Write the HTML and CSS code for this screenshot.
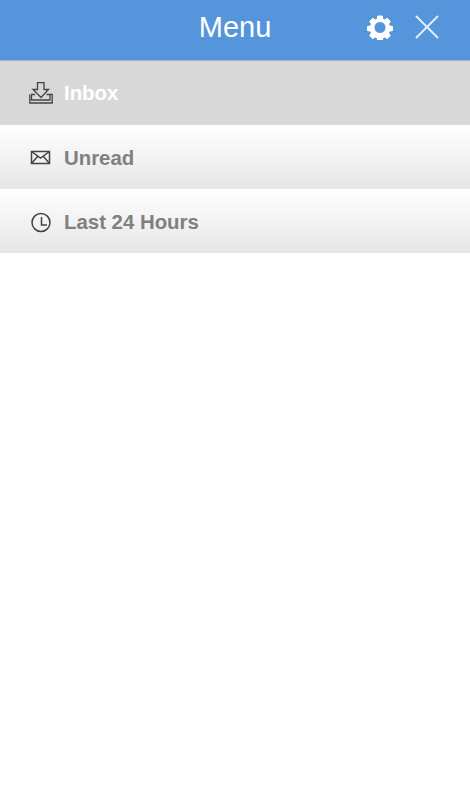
FILE: index.html
```html
<!DOCTYPE html>
<html lang="en">
<head>
  <meta charset="UTF-8">
  <meta name="viewport" content="width=device-width, initial-scale=1.0">
  <title>Menu</title>
  <link rel="stylesheet" href="styles.css">
</head>
<body>
  <header class="top-bar">
    <h1>Menu</h1>
    <div class="top-actions">
      <svg class="gear-icon" width="26" height="26" viewBox="0.5 0 26 26">
        <path fill="#fff" stroke="#fff" stroke-width="1" stroke-linejoin="round" fill-rule="evenodd" d="M11.800 2.500h4.400l.6 3.200 1.700.8 2.800-1.700 3 3-1.700 2.800.7 1.700 3.200.7v4l-3.200.7-.7 1.700 1.700 2.800-3 3-2.800-1.700-1.700.8-.6 3.200h-4.400l-.6-3.200-1.700-.8-2.800 1.700-3-3 1.700-2.800-.7-1.700-3.200-.7v-4l3.200-.7.7-1.700-1.700-2.800 3-3 2.800 1.700 1.700-.8zM14 8a6 6 0 1 0 0 12 6 6 0 0 0 0-12z" transform="translate(-.5 -.5)"/>
      </svg>
      <svg class="close-icon" width="24" height="24" viewBox="0 0 24 24">
        <path d="M1 1l22 22M23 1L1 23" stroke="#e4eefa" stroke-width="2" fill="none"/>
      </svg>
    </div>
  </header>

  <nav class="menu">
    <a class="menu-item active">
      <svg class="item-icon" width="24" height="24" viewBox="0 0 24 24" fill="none" stroke="#444" stroke-width="1.300">
        <path d="M8.500 1.700h6.500v6.800h4.500L12 16.500 4 8.500h4.500z"/>
        <path d="M6 13.500H2.500V19h18.500v-5.500H17.500"/>
        <path d="M.8 13.500v8.500h22.400v-8.500h-2"/>
      </svg>
      <span>Inbox</span>
    </a>
    <a class="menu-item">
      <svg class="item-icon" width="24" height="24" viewBox="0 0 24 24" fill="none" stroke="#444" stroke-width="1.500">
        <rect x="2.500" y="6.500" width="18" height="12"/>
        <path d="M2.500 6.500l9 6.500 9-6.500M2.500 18.500l6.500-7.500M20.500 18.500L14 11"/>
      </svg>
      <span>Unread</span>
    </a>
    <a class="menu-item">
      <svg class="item-icon" width="24" height="24" viewBox="0 0 24 24" fill="none" stroke="#444" stroke-width="1.500">
        <circle cx="12" cy="13.500" r="9"/>
        <path d="M12.500 8v8H18"/>
      </svg>
      <span>Last 24 Hours</span>
    </a>
  </nav>
</body>
</html>
```

FILE: styles.css
```css
body {
  margin: 0;
  font-family: 'Liberation Sans', Arial, sans-serif;
  background-color: #fff;
}
.top-bar {
  position: relative;
  display: flex;
  align-items: center;
  justify-content: flex-end;
  height: 54px;
  padding-bottom: 6px;
  background-color: #5495dc;
  border-bottom: 1px solid #a9b4c0;
}
.top-bar h1 {
  position: absolute;
  left: 0;
  right: 0;
  margin: 1px 0 0;
  text-align: center;
  color: #fff;
  font-size: 29px;
  font-weight: normal;
}
.top-actions {
  display: flex;
  align-items: center;
  gap: 22px;
  padding-right: 31px;
}
.top-actions svg {
  display: block;
}
.menu-item {
  display: flex;
  align-items: center;
  gap: 11px;
  height: 64px;
  padding-left: 29px;
  padding-top: 2px;
  box-sizing: border-box;
  background: linear-gradient(#fff, #e6e6e6);
  color: #808080;
  font-size: 20.400px;
  font-weight: bold;
}
.menu-item.active {
  background: #d8d8d8;
  color: #fff;
}
.menu-item.active span {
  margin-bottom: 2px;
}
.item-icon {
  display: block;
  flex: none;
  margin-bottom: 2px;
}
```
